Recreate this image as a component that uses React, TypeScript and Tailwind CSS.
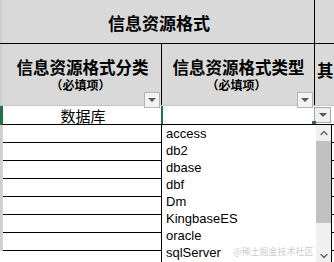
import { ChevronDown, ChevronUp } from 'lucide-react';

const items = ['access', 'db2', 'dbase', 'dbf', 'Dm', 'KingbaseES', 'oracle', 'sqlServer'];

const cjk = "font-['Noto_Sans_CJK_SC','Noto_Sans',sans-serif]";

function FilterButton() {
  return (
    <div className="w-[16px] h-[16px] bg-[#f3f3f3] border border-[#b4b4b4] flex items-center justify-center">
      <div className="w-0 h-0 border-l-[4px] border-r-[4px] border-t-[4px] border-l-transparent border-r-transparent border-t-[#595959]" />
    </div>
  );
}

export default function App() {
  const rows = Array.from({ length: 8 });

  return (
    <div className={`relative w-[334px] h-[262px] overflow-hidden bg-white ${cjk}`}>
      {/* header row 1 */}
      <div className="flex h-[44px] bg-[#d9d9d9] border-b border-black">
        <div className="w-[2px] bg-[#cdcdcd]" />
        <div className="w-[313px] border-r border-black flex items-center justify-center pt-[2px]">
          <span className="text-[17px] font-bold text-black leading-none pl-[2px]">信息资源格式</span>
        </div>
        <div className="flex-1" />
      </div>

      {/* header row 2 */}
      <div className="flex h-[62px] bg-[#d9d9d9] border-b border-[#c6c6c6]">
        <div className="w-[2px] bg-[#cdcdcd]" />
        <div className="w-[160px] border-r border-black flex flex-col">
          <div className="flex flex-col items-center pt-[14px] pl-[2px]">
            <span className="text-[16.5px] font-bold leading-[18px] text-black">信息资源格式分类</span>
            <span className="text-[12px] font-bold leading-[14px] mt-[2px] text-black pr-[4px]">（必填项）</span>
          </div>
          <div className="flex justify-end pr-[1px] mt-auto mb-[1px]">
            <FilterButton />
          </div>
        </div>
        <div className="w-[153px] border-r border-black flex flex-col">
          <div className="flex flex-col items-center pt-[14px] pl-[1px]">
            <span className="text-[16.5px] font-bold leading-[18px] text-black">信息资源格式类型</span>
            <span className="text-[12px] font-bold leading-[14px] mt-[2px] text-black pr-[4px]">（必填项）</span>
          </div>
          <div className="flex justify-end pr-[1px] mt-auto mb-[1px]">
            <FilterButton />
          </div>
        </div>
        <div className="flex-1 pt-[14px] pl-[2px]">
          <span className="text-[16.5px] font-bold leading-[18px] text-black">其</span>
        </div>
      </div>

      {/* data rows */}
      {rows.map((_, i) => (
        <div key={i} className={`flex ${i === 0 ? 'h-[19px]' : 'h-[18px]'}`}>
          <div className={`w-[3px] ${i === 0 ? 'bg-[#217346]' : 'bg-[#cfcfcf]'}`} />
          <div className="w-[158px] border-b border-black flex items-center justify-center">
            {i === 0 && <span className="text-[15px] leading-none text-black pl-[2px]">数据库</span>}
          </div>
          <div
            className={`w-[153px] border-b border-black ${
              i === 0 ? 'border-l-2 border-l-[#217346]' : 'border-l border-l-black'
            }`}
          />
          <div className="flex-1 border-b border-black">
            {i === 0 && (
              <div className="w-[17px] h-[16px] mt-[1px] bg-[#f0f0f0] border border-[#a8a8a8] flex items-center justify-center">
                <div className="w-0 h-0 border-l-[4px] border-r-[4px] border-t-[4px] border-l-transparent border-r-transparent border-t-[#595959]" />
              </div>
            )}
          </div>
        </div>
      ))}

      {/* fill handle */}
      <div className="absolute left-[312px] top-[121px] w-[4px] h-[4px] bg-[#217346]" />

      {/* dropdown list */}
      <div className="absolute left-[161px] top-[124px] w-[171px] h-[140px] bg-white border border-black flex">
        <div className="flex-1 flex flex-col font-['Liberation_Sans',Arial,sans-serif]">
          {items.map((t) => (
            <div key={t} className="h-[17px] flex items-center pl-[4px] text-[13px] text-black">
              {t}
            </div>
          ))}
        </div>
        <div className="w-[15px] bg-[#f0f0f0] flex flex-col items-center">
          <div className="h-[16px] w-full flex items-center justify-center">
            <ChevronUp size={12} strokeWidth={2.5} className="text-[#606060]" />
          </div>
          <div className="w-full h-[82px] bg-[#c1c1c1]" />
          <div className="flex-1" />
          <div className="h-[14px] w-full flex items-center justify-center">
            <ChevronDown size={12} strokeWidth={2.5} className="text-[#606060]" />
          </div>
        </div>
      </div>

      {/* watermark */}
      <div className="absolute left-[233px] top-[247px] text-[9px] leading-none text-[#cccccc] whitespace-nowrap">
        @稀土掘金技术社区
      </div>
    </div>
  );
}
